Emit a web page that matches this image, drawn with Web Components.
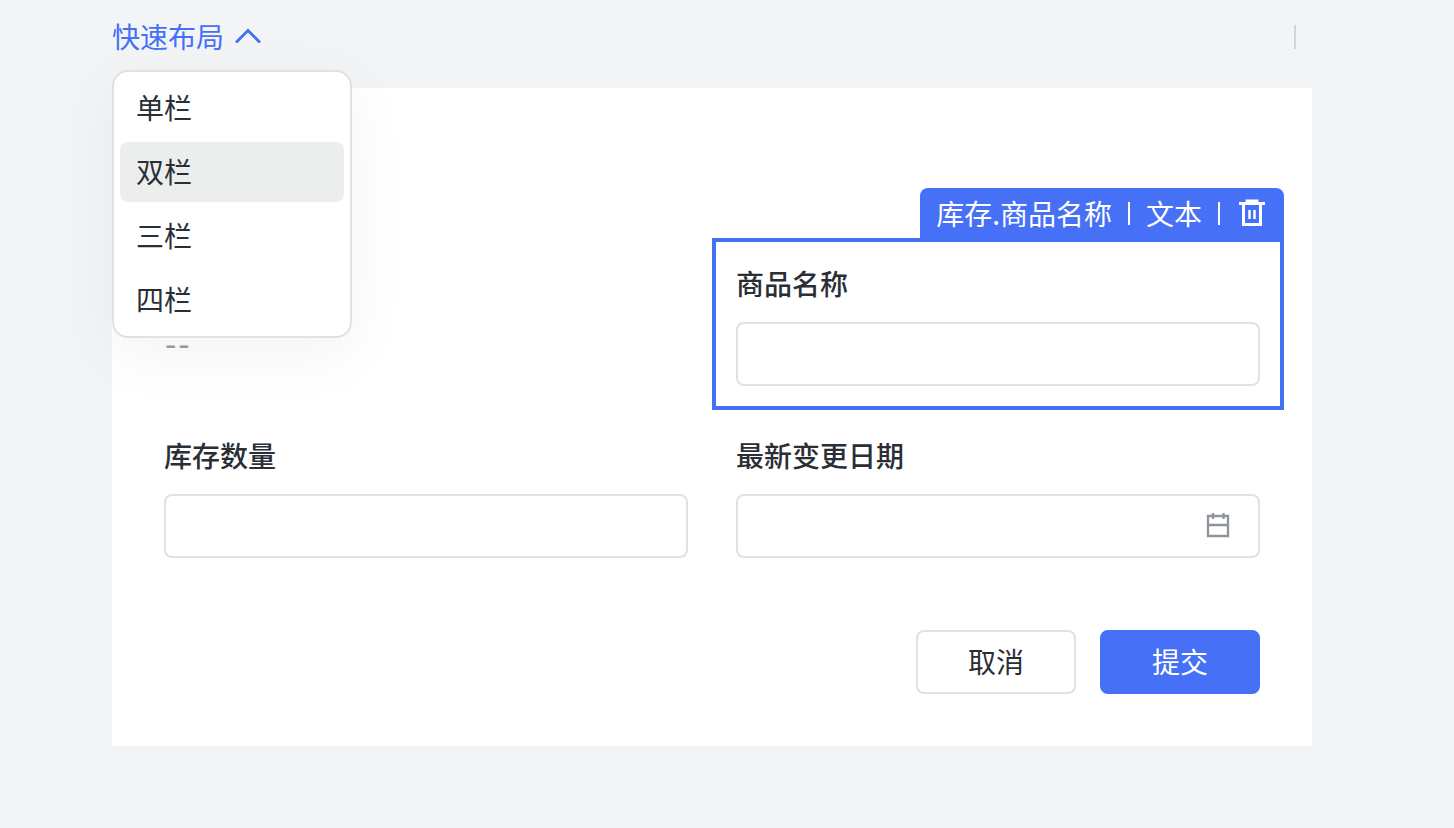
<!DOCTYPE html>
<html lang="zh-CN">
<head>
<meta charset="utf-8">
<title>快速布局</title>
<style>
    html, body {
        margin: 0;
        height: 100%;
        background: #f3f4f6;
        font-family: "Noto Sans CJK SC", "Noto Sans", sans-serif;
        font-size: 28px;
        color: #2a2e35;
    }
</style>
</head>
<body>
<layout-page>
    <layout-bar slot="bar">
        <layout-menu>
            <menu-item>单栏</menu-item>
            <menu-item active>双栏</menu-item>
            <menu-item>三栏</menu-item>
            <menu-item>四栏</menu-item>
        </layout-menu>
    </layout-bar>
    <form-card>
        <form-field value="--"></form-field>
        <form-field label="商品名称" selected tag="库存.商品名称" kind="文本"></form-field>
        <form-field label="库存数量"></form-field>
        <form-field label="最新变更日期" date></form-field>
        <action-button slot="actions">取消</action-button>
        <action-button slot="actions" primary>提交</action-button>
    </form-card>
</layout-page>

<script>
class LayoutPage extends HTMLElement {
    constructor() {
        super();
        this.attachShadow({ mode: 'open' });
    }

    connectedCallback() {
        this.shadowRoot.innerHTML = `
            <style>
                :host {
                    display: block;
                    width: 1200px;
                    margin-left: 112px;
                }
            </style>
            <slot name="bar"></slot>
            <slot></slot>
        `;
    }
}

class LayoutBar extends HTMLElement {
    constructor() {
        super();
        this.attachShadow({ mode: 'open' });
    }

    connectedCallback() {
        this.shadowRoot.innerHTML = `
            <style>
                :host {
                    display: flex;
                    align-items: center;
                    justify-content: space-between;
                    position: relative;
                    height: 74px;
                    margin-bottom: 14px;
                    padding-right: 16px;
                    box-sizing: border-box;
                }

                .toggle {
                    display: flex;
                    align-items: center;
                    gap: 11px;
                    color: #4670f6;
                }

                .toggle span {
                    line-height: 40px;
                    padding-bottom: 3px;
                }

                .toggle svg { margin-bottom: 2px; }

                svg { display: block; }

                .divider {
                    width: 2px;
                    height: 24px;
                    background: #d4d5d8;
                }
            </style>
            <div class="toggle">
                <span>快速布局</span>
                <svg width="26" height="16" viewBox="0 0 26 16" fill="none" stroke="#4670f6" stroke-width="3">
                    <path d="M1 14.5 13 2.5l12 12"/>
                </svg>
            </div>
            <div class="divider"></div>
            <slot></slot>
        `;
    }
}

class LayoutMenu extends HTMLElement {
    constructor() {
        super();
        this.attachShadow({ mode: 'open' });
    }

    connectedCallback() {
        this.shadowRoot.innerHTML = `
            <style>
                :host {
                    position: absolute;
                    left: 0;
                    top: 70px;
                    z-index: 5;
                    display: flex;
                    flex-direction: column;
                    gap: 4px;
                    width: 240px;
                    padding: 6px;
                    box-sizing: border-box;
                    background: #fff;
                    border: 2px solid #e0e1e5;
                    border-radius: 16px;
                    box-shadow: 0 16px 64px rgba(0, 0, 0, 0.05);
                }
            </style>
            <slot></slot>
        `;
    }
}

class MenuItem extends HTMLElement {
    constructor() {
        super();
        this.attachShadow({ mode: 'open' });
    }

    connectedCallback() {
        this.shadowRoot.innerHTML = `
            <style>
                :host {
                    display: block;
                    height: 60px;
                    line-height: 58px;
                    padding: 0 16px;
                    box-sizing: border-box;
                    border-radius: 8px;
                    color: #2a2e35;
                }

                :host([active]) {
                    background: #eceeed;
                }
            </style>
            <slot></slot>
        `;
    }
}

class FormCard extends HTMLElement {
    constructor() {
        super();
        this.attachShadow({ mode: 'open' });
    }

    connectedCallback() {
        this.shadowRoot.innerHTML = `
            <style>
                :host {
                    display: block;
                    height: 658px;
                    padding: 150px 28px 52px;
                    box-sizing: border-box;
                    background: #fff;
                }

                .grid {
                    display: grid;
                    grid-template-columns: 1fr 1fr;
                }

                .actions {
                    display: flex;
                    justify-content: flex-end;
                    gap: 24px;
                    margin-top: 48px;
                    padding-right: 24px;
                }
            </style>
            <div class="grid"><slot></slot></div>
            <div class="actions"><slot name="actions"></slot></div>
        `;
    }
}

class FormField extends HTMLElement {
    constructor() {
        super();
        this.attachShadow({ mode: 'open' });
    }

    connectedCallback() {
        const label = this.getAttribute('label') || '';
        const value = this.getAttribute('value');
        const tag = this.getAttribute('tag');
        const calendar = `
            <svg class="calendar" width="26" height="26" viewBox="0 0 26 26" fill="none" stroke="#8f949c" stroke-width="2.3">
                <path d="M4 3h20v20H4zM4 12h20M9 0v6M19.5 0v6"/>
            </svg>`;

        this.shadowRoot.innerHTML = `
            <style>
                :host {
                    display: block;
                    position: relative;
                    height: 172px;
                    padding: 20px;
                    box-sizing: border-box;
                    border: 4px solid transparent;
                }

                :host([selected]) {
                    border-color: #4670f6;
                }

                .label {
                    height: 44px;
                    line-height: 42px;
                    font-weight: 500;
                    color: #2a2e35;
                }

                .control {
                    display: flex;
                    align-items: center;
                    justify-content: flex-end;
                    height: 64px;
                    margin-top: 16px;
                    padding-right: 28px;
                    box-sizing: border-box;
                    border: 2px solid #e0e1e3;
                    border-radius: 8px;
                }

                .value {
                    margin-top: 16px;
                    margin-left: 1px;
                    height: 44px;
                    line-height: 44px;
                    font-size: 34px;
                    letter-spacing: 2px;
                    color: #9a9ea6;
                    font-family: "Liberation Sans", sans-serif;
                }

                .tag {
                    position: absolute;
                    right: -4px;
                    top: -54px;
                    display: flex;
                    align-items: center;
                    gap: 16px;
                    height: 54px;
                    padding: 0 16px 4px;
                    box-sizing: border-box;
                    background: #4670f6;
                    color: #fff;
                    border-radius: 8px 8px 0 0;
                    white-space: nowrap;
                }

                .tag span { margin-top: -1px; }

                .tag i {
                    width: 2px;
                    height: 23px;
                    background: #fff;
                }

                svg { display: block; }
            </style>
            ${tag ? `
                <div class="tag">
                    <span>${tag}</span><i></i>
                    <span>${this.getAttribute('kind')}</span><i></i>
                    <svg width="32" height="32" viewBox="0 0 32 32" fill="none" stroke="#fff" stroke-width="3">
                        <path d="M3 6.5h26M11 6.5V4h10v2.5M7.5 6.5v21h17v-21"/>
                        <path stroke-width="2.5" d="M13.5 13v9M18.5 13v9"/>
                    </svg>
                </div>` : ''}
            <div class="label">${label}</div>
            ${value
                ? `<div class="value">${value}</div>`
                : `<div class="control">${this.hasAttribute('date') ? calendar : ''}</div>`}
        `;
    }
}

class ActionButton extends HTMLElement {
    constructor() {
        super();
        this.attachShadow({ mode: 'open' });
    }

    connectedCallback() {
        this.shadowRoot.innerHTML = `
            <style>
                :host {
                    display: flex;
                    align-items: center;
                    justify-content: center;
                    width: 160px;
                    height: 64px;
                    padding-bottom: 2px;
                    box-sizing: border-box;
                    background: #fff;
                    border: 2px solid #e0e1e3;
                    border-radius: 8px;
                    color: #2a2e35;
                }

                :host([primary]) {
                    background: #4670f6;
                    border-color: #4670f6;
                    color: #fff;
                }
            </style>
            <slot></slot>
        `;
    }
}

customElements.define('layout-page', LayoutPage);
customElements.define('layout-bar', LayoutBar);
customElements.define('layout-menu', LayoutMenu);
customElements.define('menu-item', MenuItem);
customElements.define('form-card', FormCard);
customElements.define('form-field', FormField);
customElements.define('action-button', ActionButton);
</script>
</body>
</html>
